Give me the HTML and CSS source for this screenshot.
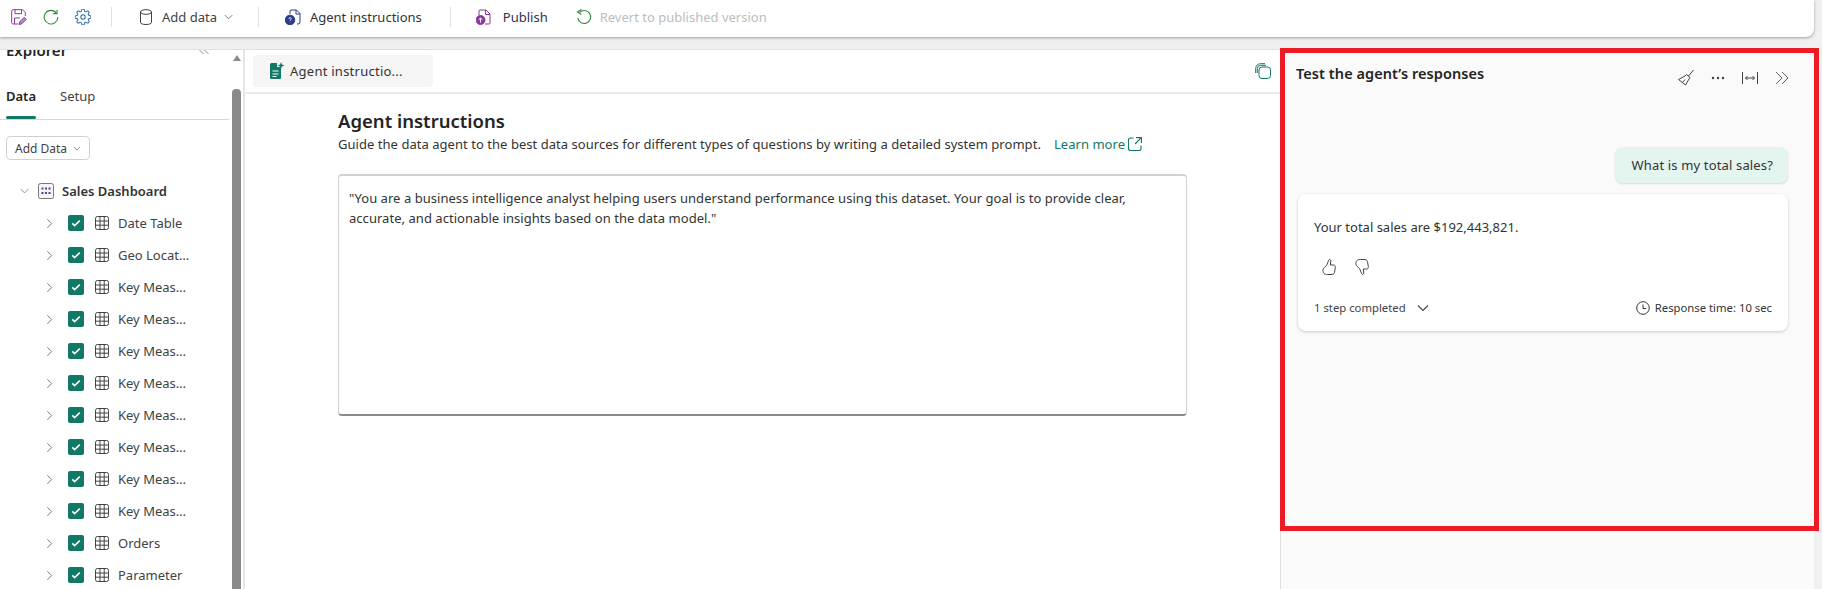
FILE: index.html
```html
<!DOCTYPE html>
<html lang="en">
<head>
<meta charset="utf-8">
<title>Agent instructions</title>
<link rel="stylesheet" href="styles.css">
</head>
<body>
<svg class="defs" width="0" height="0" aria-hidden="true">
  <symbol id="table" viewBox="0 0 14 14"><path d="M2.5.5h9a2 2 0 0 1 2 2v9a2 2 0 0 1-2 2h-9a2 2 0 0 1-2-2v-9a2 2 0 0 1 2-2zM.5 5h13M.5 9.2h13M5 .5v13M9.2 .5v13" fill="none" stroke="#424242"/></symbol>
  <symbol id="check" viewBox="0 0 16 16"><rect width="16" height="16" rx="2" fill="#117865"/><path d="M4.3 8.3l2.4 2.3 5-5" fill="none" stroke="#fff" stroke-width="1.6"/></symbol>
  <symbol id="chev" viewBox="0 0 8 12"><path d="M1.5 1l5 5-5 5" fill="none" stroke="#757575" stroke-width="1.1"/></symbol>
  <symbol id="down" viewBox="0 0 12 8"><path d="M1 1.5l5 5 5-5" fill="none" stroke="currentColor" stroke-width="1.1"/></symbol>
</svg>

<header class="toolbar">
  <div class="tool-icons">
    <svg class="ico" viewBox="0 0 16 16" fill="none" stroke="#8a3a9a"><path d="M7 15H2.200A1.500 1.500 0 0 1 .7 13.500V2.200A1.500 1.500 0 0 1 2.200.7h9.300l2.800 2.800V7"/><path d="M4 .7v4h6.500v-4M3.500 15V9h5.500"/><path d="M8 15.500l.6-2.600 4.600-4.600 2 2-4.600 4.600z" fill="#b58ac0"/></svg>
    <svg class="ico" viewBox="0 0 16 16" fill="none" stroke="#2f8a3c" stroke-width="1.1"><path d="M13.500 4.200A6.800 6.800 0 1 0 14.800 8"/><path d="M14 .8v3.800h-3.800"/></svg>
    <svg class="ico" viewBox="1 1 22 22" fill="none" stroke="#2a6aa8" stroke-width="1.4"><path d="M12 15a3 3 0 1 0 0-6 3 3 0 0 0 0 6z"/><path d="M19.4 15a1.65 1.65 0 0 0 .33 1.82l.06.06a2 2 0 0 1 0 2.83 2 2 0 0 1-2.83 0l-.06-.06a1.65 1.65 0 0 0-1.82-.33 1.65 1.65 0 0 0-1 1.51V21a2 2 0 0 1-2 2 2 2 0 0 1-2-2v-.09A1.65 1.65 0 0 0 9 19.4a1.65 1.65 0 0 0-1.82.33l-.06.06a2 2 0 0 1-2.83 0 2 2 0 0 1 0-2.83l.06-.06a1.65 1.65 0 0 0 .33-1.82 1.65 1.65 0 0 0-1.51-1H3a2 2 0 0 1-2-2 2 2 0 0 1 2-2h.09A1.65 1.65 0 0 0 4.6 9a1.65 1.65 0 0 0-.33-1.82l-.06-.06a2 2 0 0 1 0-2.83 2 2 0 0 1 2.83 0l.06.06a1.65 1.65 0 0 0 1.82.33H9a1.65 1.65 0 0 0 1-1.51V3a2 2 0 0 1 2-2 2 2 0 0 1 2 2v.09a1.65 1.65 0 0 0 1 1.51 1.65 1.65 0 0 0 1.82-.33l.06-.06a2 2 0 0 1 2.83 0 2 2 0 0 1 0 2.83l-.06.06a1.65 1.65 0 0 0-.33 1.82V9a1.65 1.65 0 0 0 1.51 1H21a2 2 0 0 1 2 2 2 2 0 0 1-2 2h-.09a1.65 1.65 0 0 0-1.51 1z"/></svg>
  </div>
  <span class="sep"></span>
  <div class="tool tool-add">
    <svg class="ico-cyl" viewBox="0 0 12 16" fill="none" stroke="#424242"><ellipse cx="6" cy="3" rx="5.500" ry="2.300"/><path d="M.5 3v10.500c0 1.200 2.500 2 5.500 2s5.500-.8 5.500-2V3"/></svg>
    <span class="tool-label">Add data</span>
    <svg class="ico-down" viewBox="0 0 12 8"><use href="#down"/></svg>
  </div>
  <span class="sep sep-b"></span>
  <div class="tool tool-agent">
    <svg class="ico" viewBox="0 0 16 16" fill="none" stroke="#2b3a8c"><path d="M5 5V2a1 1 0 0 1 1-1h5.500L15 4.500V13a2 2 0 0 1-2 2h-1"/><path d="M11 1v4h4"/><circle cx="5" cy="11" r="4.800" fill="#2b3a8c"/><path d="M3.800 9.800a1.200 1.200 0 1 1 1.800 1.100l-.6.500v.4M5 13.400v.2" stroke="#fff"/></svg>
    <span class="tool-label">Agent instructions</span>
  </div>
  <span class="sep sep-c"></span>
  <div class="tool tool-pub">
    <svg class="ico" viewBox="0 0 16 16" fill="none" stroke="#8a3a9a"><path d="M3 6V2a1 1 0 0 1 1-1h6l4 4v9a1 1 0 0 1-1 1H9"/><path d="M9.500 1v4.500H14"/><circle cx="4.500" cy="11" r="4.500" fill="#8a3a9a"/><path d="M4.500 13.500v-4.500M2.700 10.800l1.800-1.800 1.800 1.800" stroke="#fff"/></svg>
    <span class="tool-label">Publish</span>
  </div>
  <div class="tool tool-rev">
    <svg class="ico" viewBox="0 0 16 16" fill="none" stroke="#2f8a3c" stroke-width="1.100"><path d="M3.500 3.500A6.500 6.500 0 1 1 1.800 9"/><path d="M5.500.5L1.500 2.800l3.800 2.800"/></svg>
    <span class="tool-label disabled">Revert to published version</span>
  </div>
</header>

<main class="main">
  <aside class="explorer">
    <div class="explorer-scroll">
      <div class="explorer-head">
        <h2 class="explorer-title">Explorer</h2>
        <svg class="collapse" viewBox="0 0 12 10" fill="none" stroke="#8a8a8a"><path d="M5.500 1L1.500 5l4 4M10.500 1l-4 4 4 4"/></svg>
      </div>
      <nav class="tabs">
        <span class="tab active">Data</span>
        <span class="tab">Setup</span>
      </nav>
      <button class="add-btn">Add Data <svg class="ico-down-s" viewBox="0 0 12 8"><use href="#down"/></svg></button>
      <div class="tree-root">
        <svg class="root-chev" viewBox="0 0 12 8"><use href="#down"/></svg>
        <svg class="root-ico" viewBox="0 0 16 16"><rect x=".5" y=".5" width="15" height="15" rx="2" fill="#f5f5f5" stroke="#777"/><g fill="#5b3d9a"><rect x="3.500" y="4.500" width="2" height="2"/><rect x="7" y="4.500" width="2" height="2"/><rect x="10.500" y="4.500" width="2" height="2"/><rect x="7" y="9" width="2" height="2"/><rect x="10.500" y="9" width="2" height="2"/><rect x="3.500" y="9" width="2" height="2"/></g></svg>
        <span class="root-label">Sales Dashboard</span>
      </div>
      <ul class="tree">
        <li class="row"><svg class="c"><use href="#chev"/></svg><svg class="k"><use href="#check"/></svg><svg class="t"><use href="#table"/></svg><span class="name">Date Table</span></li>
        <li class="row"><svg class="c"><use href="#chev"/></svg><svg class="k"><use href="#check"/></svg><svg class="t"><use href="#table"/></svg><span class="name">Geo Location</span></li>
        <li class="row"><svg class="c"><use href="#chev"/></svg><svg class="k"><use href="#check"/></svg><svg class="t"><use href="#table"/></svg><span class="name">Key Measures</span></li>
        <li class="row"><svg class="c"><use href="#chev"/></svg><svg class="k"><use href="#check"/></svg><svg class="t"><use href="#table"/></svg><span class="name">Key Measures</span></li>
        <li class="row"><svg class="c"><use href="#chev"/></svg><svg class="k"><use href="#check"/></svg><svg class="t"><use href="#table"/></svg><span class="name">Key Measures</span></li>
        <li class="row"><svg class="c"><use href="#chev"/></svg><svg class="k"><use href="#check"/></svg><svg class="t"><use href="#table"/></svg><span class="name">Key Measures</span></li>
        <li class="row"><svg class="c"><use href="#chev"/></svg><svg class="k"><use href="#check"/></svg><svg class="t"><use href="#table"/></svg><span class="name">Key Measures</span></li>
        <li class="row"><svg class="c"><use href="#chev"/></svg><svg class="k"><use href="#check"/></svg><svg class="t"><use href="#table"/></svg><span class="name">Key Measures</span></li>
        <li class="row"><svg class="c"><use href="#chev"/></svg><svg class="k"><use href="#check"/></svg><svg class="t"><use href="#table"/></svg><span class="name">Key Measures</span></li>
        <li class="row"><svg class="c"><use href="#chev"/></svg><svg class="k"><use href="#check"/></svg><svg class="t"><use href="#table"/></svg><span class="name">Key Measures</span></li>
        <li class="row"><svg class="c"><use href="#chev"/></svg><svg class="k"><use href="#check"/></svg><svg class="t"><use href="#table"/></svg><span class="name">Orders</span></li>
        <li class="row"><svg class="c"><use href="#chev"/></svg><svg class="k"><use href="#check"/></svg><svg class="t"><use href="#table"/></svg><span class="name">Parameter</span></li>
      </ul>
    </div>
    <div class="scrollbar">
      <span class="arrow"></span>
      <span class="thumb"></span>
    </div>
  </aside>

  <section class="center">
    <div class="tabbar">
      <div class="doc-tab">
        <svg class="doc-ico" viewBox="0 0 16 18"><path d="M1 2.500A1.500 1.500 0 0 1 2.500 1H8v4h4v11a1 1 0 0 1-1 1H2a1 1 0 0 1-1-1z" fill="#117865"/><path d="M3.500 9h6M3.500 12h6M3.500 14.500h4" stroke="#fff"/><path d="M12 0l.9 2.600L15.500 3.500l-2.600.9L12 7l-.9-2.600L8.500 3.500l2.600-.9z" fill="#117865"/></svg>
        <span class="doc-label">Agent instructio...</span>
      </div>
      <svg class="copilot" viewBox="0 0 16 16" fill="none" stroke="#117865"><rect x="4" y="4" width="11.500" height="11.500" rx="3"/><path d="M.7 10V5.500A4.800 4.800 0 0 1 5.500.7H10M2.300 10V5.700A3.400 3.400 0 0 1 5.700 2.300H11"/></svg>
    </div>
    <div class="editor">
      <h1 class="editor-title">Agent instructions</h1>
      <p class="editor-desc">Guide the data agent to the best data sources for different types of questions by writing a detailed system prompt.<a class="learn">Learn more<svg class="ext" viewBox="0 0 14 14" fill="none" stroke="#117865" stroke-width="1.100"><path d="M5.500 1H2.500A2 2 0 0 0 .5 3v8.500a2 2 0 0 0 2 2H11a2 2 0 0 0 2-2V8.500M8 .6h5.400V6M13.400 .6L7 7"/></svg></a></p>
      <div class="prompt">"You are a business intelligence analyst helping users understand performance using this dataset. Your goal is to provide clear, accurate, and actionable insights based on the data model."</div>
    </div>
  </section>

  <section class="chat">
    <div class="chat-head">
      <h2 class="chat-title">Test the agent’s responses</h2>
      <div class="chat-tools">
        <svg class="tool-s" viewBox="0 0 18 18" fill="none" stroke="#424242"><path d="M16.500 1l-5 6"/><path d="M9.500 5.500l3.500 3-1 1.500-3.500 6L1.500 10.500l6.500-3.500z"/><path d="M5.500 13.500l2.500-3"/></svg>
        <svg class="tool-s" viewBox="0 0 18 18" fill="#424242"><circle cx="4" cy="9" r="1.200"/><circle cx="9" cy="9" r="1.200"/><circle cx="14" cy="9" r="1.200"/></svg>
        <svg class="tool-s" viewBox="0 0 18 18" fill="none" stroke="#424242"><path d="M1.500 3v12M16.500 3v12M4.500 9h9M6.500 7l-2 2 2 2M11.500 7l2 2-2 2"/></svg>
        <svg class="tool-s" viewBox="0 0 18 18" fill="none" stroke="#616161"><path d="M3 3l6 6-6 6M9 3l6 6-6 6"/></svg>
      </div>
    </div>
    <div class="bubble-row"><div class="bubble">What is my total sales?</div></div>
    <article class="card">
      <p class="answer">Your total sales are $192,443,821.</p>
      <div class="feedback">
        <svg class="thumb-ico" viewBox="0 0 16 18" fill="none" stroke="#424242"><path d="M8.500 1.500c1 0 1.500 1 1.200 2.500L9.300 7h3.200c1.500 0 2 1 1.800 2.500l-.8 5c-.3 1.500-2 2-3.500 2H6.500c-3.500 0-5-2-4.500-5 .4-2 2.500-2.500 3.500-4C6.500 6 7.500 1.500 8.500 1.500z"/></svg>
        <svg class="thumb-ico" viewBox="0 0 16 18" fill="none" stroke="#424242"><path d="M8.500 16.500c1 0 1.500-1 1.200-2.500L9.300 11h3.200c1.500 0 2-1 1.800-2.500l-.8-5c-.3-1.500-2-2-3.500-2H6.500c-3.500 0-5 2-4.500 5 .4 2 2.500 2.500 3.500 4 1 1.500 2 6 3 6z"/></svg>
      </div>
      <div class="card-foot">
        <span class="steps">1 step completed<svg class="steps-chev" viewBox="0 0 12 8"><use href="#down"/></svg></span>
        <span class="resp"><svg class="clock" viewBox="0 0 14 14" fill="none" stroke="#333"><circle cx="7" cy="7" r="6.300"/><path d="M7 3.500V7.500H10"/></svg>Response time: 10 sec</span>
      </div>
    </article>
  </section>
</main>
<div class="highlight"></div>
</body>
</html>
```

FILE: styles.css
```css
* { box-sizing: border-box; }
html, body { margin: 0; height: 589px; overflow: hidden; }
body {
  position: relative;
  background: #f0f0f0;
  font-family: "Noto Sans", "Open Sans", sans-serif;
  font-size: 13px;
  color: #242424;
  display: flex;
  flex-direction: column;
}
.defs { position: absolute; }
h1, h2, p, ul { margin: 0; padding: 0; }

/* toolbar */
.toolbar {
  height: 37px;
  flex: none;
  width: 1814px;
  background: #fff;
  border-radius: 0 0 8px 0;
  box-shadow: 0 1px 3px rgba(0,0,0,.35);
  display: flex;
  align-items: center;
  padding-left: 11px;
  padding-bottom: 3px;
}
.tool-icons { display: flex; gap: 16px; }
.ico { width: 16px; height: 16px; display: block; flex: none; }
.sep { width: 1px; height: 20px; background: #e0e0e0; margin-left: 20px; }
.sep-b { margin-left: 25px; }
.sep-c { margin-left: 28px; }
.tool { display: flex; align-items: center; }
.tool-label { font-size: 13px; color: #424242; }
.tool-add { margin-left: 28px; }
.ico-cyl { width: 12px; height: 16px; margin-right: 10px; }
.ico-down { width: 9px; height: 6px; margin-left: 7px; color: #616161; }
.tool-agent { margin-left: 26px; gap: 9px; }
.tool-pub { margin-left: 25px; gap: 11px; }
.tool-pub .tool-label { color: #2b3550; }
.tool-agent .tool-label { color: #333; }
.tool-rev { margin-left: 28px; gap: 8px; }
.disabled { color: #bdbdbd; }

/* main */
.main {
  flex: 1;
  margin-top: 12px;
  width: 1814px;
  display: flex;
  min-height: 0;
  background: #fff;
  border-top: 1px solid #e0e0e0;
}

/* explorer */
.explorer { width: 245px; flex: none; display: flex; border-right: 2px solid #e6e6e6; overflow: hidden; }
.explorer-scroll { width: 232px; flex: none; margin-top: -20px; }
.explorer-head { height: 40px; display: flex; align-items: center; padding: 0 22px 0 6px; justify-content: space-between; }
.explorer-title { font-size: 15px; font-weight: 600; }
.collapse { width: 12px; height: 10px; }
.tabs { display: flex; gap: 24px; height: 50px; padding: 17px 0 0 6px; margin-right: 3px; border-bottom: 1px solid #d6d6d6; }
.tab { color: #424242; position: relative; font-size: 13px; }
.tab.active { font-weight: 600; color: #242424; }
.tab.active::after { content: ""; position: absolute; left: 0; right: 0; top: 29px; height: 3px; border-radius: 2px; background: #117865; }
.add-btn {
  display: flex; align-items: center; gap: 6px;
  margin: 16px 0 0 6px;
  width: 84px; height: 24px;
  padding: 0 8px;
  border: 1px solid #d1d1d1; border-radius: 4px;
  background: #fff;
  font: 12px "Noto Sans", sans-serif;
  color: #424242;
  white-space: nowrap;
}
.ico-down-s { width: 8px; height: 5px; color: #616161; flex: none; }
.tree-root { display: flex; align-items: center; height: 32px; margin-top: 15px; padding-left: 20px; }
.root-chev { width: 9px; height: 6px; color: #757575; margin-right: 9px; }
.root-ico { width: 16px; height: 16px; margin-right: 8px; }
.root-label { font-weight: 600; font-size: 13px; color: #333; }
.tree { list-style: none; }
.row { display: flex; align-items: center; height: 32px; padding-left: 46px; }
.c { width: 7px; height: 11px; margin-right: 15px; }
.k { width: 16px; height: 16px; margin-right: 11px; }
.t { width: 14px; height: 14px; margin-right: 9px; }
.name { width: 72px; white-space: nowrap; overflow: hidden; text-overflow: ellipsis; font-size: 13px; color: #424242; }
.scrollbar { width: 9px; flex: none; position: relative; display: flex; flex-direction: column; align-items: center; }
.arrow { width: 0; height: 0; margin-top: 5px; border: 4.500px solid transparent; border-top: 0; border-bottom: 6px solid #8a8a8a; }
.thumb { width: 9px; flex: 1; margin-top: 28px; background: #8a8a8a; border-radius: 4px 4px 0 0; }

/* center */
.center { flex: 1; display: flex; flex-direction: column; min-width: 0; }
.tabbar { height: 44px; flex: none; display: flex; align-items: center; justify-content: space-between; padding: 0 9px 6px 8px; border-bottom: 2px solid #eaeaea; }
.doc-tab { width: 180px; height: 32px; margin-top: 6px; background: #f5f5f5; border-radius: 4px; display: flex; align-items: center; padding-left: 16px; gap: 5px; font-size: 13px; color: #333; }
.doc-label { letter-spacing: .25px; }
.doc-ico { width: 16px; height: 18px; }
.copilot { width: 16px; height: 16px; margin-top: 6px; }
.editor { padding: 14px 0 0 93px; }
.editor-title { font-size: 18.500px; font-weight: 600; line-height: 26px; color: #242424; }
.editor-desc { font-size: 13px; line-height: 20px; color: #333; display: flex; align-items: center; letter-spacing: .04px; }
.learn { color: #117865; margin-left: 13px; display: inline-flex; align-items: center; gap: 3px; }
.ext { width: 14px; height: 14px; }
.prompt {
  width: 849px; height: 242px;
  margin-top: 20px;
  padding: 12px 10px;
  border: 1px solid #d1d1d1;
  border-top: 2px solid #d1d1d1;
  border-bottom: 2px solid #8a8a8a;
  border-radius: 4px;
  font-size: 13px; line-height: 20px; color: #333;
  letter-spacing: .04px;
}

/* chat */
.chat { width: 534px; flex: none; background: #fafafa; border-left: 1px solid #e0e0e0; padding: 0 26px 0 15px; }
.chat-head { display: flex; justify-content: space-between; align-items: flex-start; padding-top: 13px; height: 97px; }
.chat-title { font-size: 14.500px; font-weight: 600; line-height: 20px; color: #242424; letter-spacing: .07px; }
.chat-tools { display: flex; gap: 14px; margin-top: 6px; margin-right: -3px; }
.tool-s { width: 18px; height: 18px; }
.bubble-row { display: flex; justify-content: flex-end; }
.bubble { height: 36px; padding: 0 15px 0 17px; display: flex; align-items: center; background: #e3f5ee; border-radius: 8px; box-shadow: 0 1px 2px rgba(0,0,0,.14); font-size: 13px; color: #333; letter-spacing: .15px; }
.card { margin: 11px 0 0 2px; height: 137px; background: #fff; border-radius: 8px; box-shadow: 0 1px 3px rgba(0,0,0,.2); padding: 23px 16px 0 16px; }
.answer { font-size: 13px; line-height: 20px; color: #333; }
.feedback { display: flex; gap: 17px; margin: 21px 0 0 7px; }
.thumb-ico { width: 16px; height: 18px; }
.card-foot { display: flex; justify-content: space-between; align-items: center; margin-top: 24px; font-size: 11.300px; color: #424242; }
.steps { display: flex; align-items: center; gap: 10px; }
.steps-chev { width: 14px; height: 8px; color: #424242; }
.resp { display: flex; align-items: center; gap: 5px; color: #333; }
.clock { width: 14px; height: 14px; }

/* annotation overlay */
.highlight { position: absolute; left: 1280px; top: 48px; width: 539px; height: 483px; border: 5px solid #ed1c24; pointer-events: none; }
```
